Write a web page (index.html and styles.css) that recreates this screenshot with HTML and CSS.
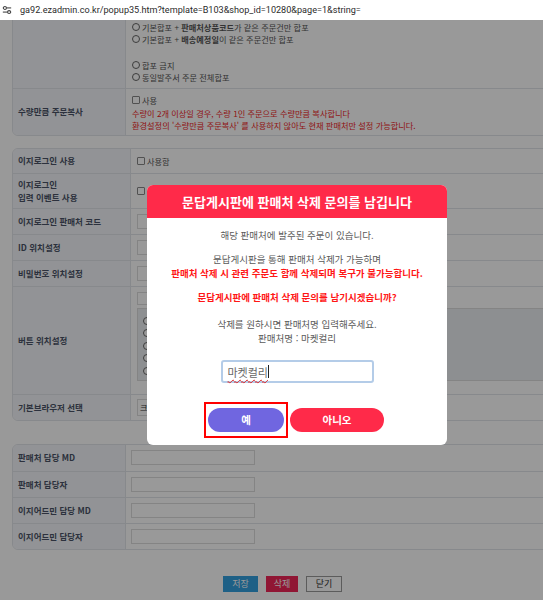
FILE: index.html
```html
<!DOCTYPE html>
<html lang="ko">
<head>
    <meta charset="UTF-8">
    <meta name="viewport" content="width=device-width, initial-scale=1.0">
    <title>판매처 설정</title>
    <link rel="stylesheet" href="styles.css">
</head>
<body>

<div class="urlbar">
    <svg class="site-icon" width="10" height="10" viewBox="0 0 12 12">
        <line x1="1" y1="3.5" x2="11" y2="3.5" stroke="#444" stroke-width="1.3"/>
        <circle cx="3.5" cy="3.5" r="1.8" fill="#fff" stroke="#444" stroke-width="1.3"/>
        <line x1="1" y1="8.5" x2="11" y2="8.5" stroke="#444" stroke-width="1.3"/>
        <circle cx="8.5" cy="8.5" r="1.8" fill="#fff" stroke="#444" stroke-width="1.3"/>
    </svg>
    <span class="url">ga92.ezadmin.co.kr/popup35.htm?template=B103&amp;shop_id=10280&amp;page=1&amp;string=</span>
</div>

<div class="page">
    <div class="content">
        <div class="tbl tbl-top">
            <div class="row">
                <div class="th"></div>
                <div class="td opts">
                    <div class="opt"><span class="radio"></span>기본합포 +&nbsp;<b>판매처상품코드</b>가 같은 주문건만 합포</div>
                    <div class="opt"><span class="radio"></span>기본합포 +&nbsp;<b>배송예정일</b>이 같은 주문건만 합포</div>
                    <div class="opt opt-gap"><span class="radio"></span>합포 금지</div>
                    <div class="opt"><span class="radio"></span>동일발주서 주문 전체합포</div>
                </div>
            </div>
            <div class="row">
                <div class="th">수량만큼 주문복사</div>
                <div class="td copy">
                    <div class="opt"><span class="check"></span>사용</div>
                    <div class="red">수량이 2개 이상일 경우, 수량 1인 주문으로 수량만큼 복사합니다</div>
                    <div class="red">환경설정의 '수량만큼 주문복사' 를 사용하지 않아도 현재 판매처만 설정 가능합니다.</div>
                </div>
            </div>
        </div>

        <div class="tbl tbl-login">
            <div class="row r24">
                <div class="th">이지로그인 사용</div>
                <div class="td"><span class="check"></span>사용함</div>
            </div>
            <div class="row r35">
                <div class="th">이지로그인<br>입력 이벤트 사용</div>
                <div class="td"><span class="check"></span></div>
            </div>
            <div class="row r26">
                <div class="th">이지로그인 판매처 코드</div>
                <div class="td"><span class="field"></span></div>
            </div>
            <div class="row r26">
                <div class="th">ID 위치설정</div>
                <div class="td"><span class="field"></span></div>
            </div>
            <div class="row r26">
                <div class="th">비밀번호 위치설정</div>
                <div class="td"><span class="field"></span></div>
            </div>
            <div class="row r108">
                <div class="th">버튼 위치설정</div>
                <div class="td stack">
                    <span class="field field-sm"></span>
                    <div class="pos-box">
                        <div class="opt"><span class="radio"></span>좌측 상단</div>
                        <div class="opt"><span class="radio"></span>우측 상단</div>
                        <div class="opt"><span class="radio"></span>좌측 하단</div>
                        <div class="opt"><span class="radio"></span>우측 하단</div>
                        <div class="opt"><span class="radio"></span>사용안함</div>
                    </div>
                </div>
            </div>
            <div class="row r26">
                <div class="th">기본브라우저 선택</div>
                <div class="td"><span class="field select">크롬</span></div>
            </div>
        </div>

        <div class="tbl tbl-md">
            <div class="row r26">
                <div class="th">판매처 담당 MD</div>
                <div class="td"><span class="field wide"></span></div>
            </div>
            <div class="row r26">
                <div class="th">판매처 담당자</div>
                <div class="td"><span class="field wide"></span></div>
            </div>
            <div class="row r26">
                <div class="th">이지어드민 담당 MD</div>
                <div class="td"><span class="field wide"></span></div>
            </div>
            <div class="row r26">
                <div class="th">이지어드민 담당자</div>
                <div class="td"><span class="field wide"></span></div>
            </div>
        </div>

        <div class="actions">
            <span class="act act-save">저장</span>
            <span class="act act-del">삭제</span>
            <span class="act act-close">닫기</span>
        </div>
    </div>

    <div class="dim"></div>

    <div class="modal">
        <div class="modal-head">문답게시판에 판매처 삭제 문의를 남깁니다</div>
        <div class="modal-body">
            <p>해당 판매처에 발주된 주문이 있습니다.</p>
            <p>문답게시판을 통해 판매처 삭제가 가능하며<br><strong class="warn">판매처 삭제 시 관련 주문도 함께 삭제되며 복구가 불가능합니다.</strong></p>
            <p class="warn ask">문답게시판에 판매처 삭제 문의를 남기시겠습니까?</p>
            <p>삭제를 원하시면 판매처명 입력해주세요.<br>판매처명 : 마켓컬리</p>
            <div class="name-input"><span class="typo">마켓컬리</span><span class="caret"></span></div>
            <div class="modal-btns">
                <span class="focus-box"><span class="btn btn-yes">예</span></span>
                <span class="btn btn-no">아니오</span>
            </div>
        </div>
    </div>
</div>

</body>
</html>
```

FILE: styles.css
```css
* {
    box-sizing: border-box;
}
body {
    margin: 0;
    font-family: "Noto Sans CJK KR", "Noto Sans", sans-serif;
    background-color: #fff;
    overflow: hidden;
}
.urlbar {
    height: 20px;
    display: flex;
    align-items: center;
    padding-left: 2px;
    background-color: #fff;
}
.site-icon {
    margin-right: 8px;
}
.url {
    font-family: Roboto, "Liberation Sans", sans-serif;
    font-size: 9.1px;
    color: #2b2b2b;
}
.page {
    position: relative;
    height: 580px;
    overflow: hidden;
}
.content {
    width: 565px;
    font-size: 8.2px;
    color: #555;
}
.tbl {
    margin-left: 12px;
    border: 1px solid #e1e4ea;
    border-radius: 6px;
    overflow: hidden;
}
.tbl-top {
    margin-top: -6px;
}
.tbl-login {
    margin-top: 12px;
}
.tbl-md {
    margin-top: 23px;
}
.row {
    display: grid;
    grid-template-columns: 113px 1fr;
    border-top: 1px solid #e1e4ea;
}
.row:first-child {
    border-top: none;
}
.tbl-login .row {
    grid-template-columns: 118px 1fr;
}
.r24 { height: 24px; }
.r26 { height: 26px; }
.r35 { height: 35px; }
.r108 { height: 108px; }
.th {
    background-color: #f4f6fa;
    border-right: 1px solid #e1e4ea;
    padding-left: 5px;
    display: flex;
    align-items: center;
    color: #4a5366;
    font-size: 8.5px;
    font-weight: bold;
    line-height: 13px;
}
.td {
    display: flex;
    align-items: center;
    padding-left: 5px;
}
.tbl-login .td {
    padding-left: 6px;
}
.opts {
    display: block;
    padding: 6px 0 5px 6px;
    line-height: 12px;
}
.copy {
    display: block;
    padding: 5px 0 3px 6px;
    line-height: 12.5px;
}
.opt {
    display: flex;
    align-items: center;
}
.opt-gap {
    margin-top: 14px;
}
.radio {
    width: 8px;
    height: 8px;
    border: 1px solid #666;
    border-radius: 50%;
    margin-right: 2px;
    background-color: #fff;
}
.check {
    width: 8px;
    height: 8px;
    border: 1px solid #888;
    border-radius: 1px;
    margin-right: 2px;
    background-color: #fff;
}
.red {
    color: #ef1e1e;
}
.field {
    display: block;
    width: 200px;
    height: 15px;
    border: 1px solid #dcdcdc;
    background-color: #fff;
}
.field.wide {
    width: 124px;
}
.field-sm {
    height: 13px;
}
.select {
    height: 17px;
    padding-left: 2px;
    line-height: 15px;
    color: #333;
}
.stack {
    flex-direction: column;
    align-items: flex-start;
    justify-content: flex-start;
    padding-top: 5px;
}
.pos-box {
    margin-top: 3px;
    width: 100%;
    height: 73px;
    border: 1px solid #dcdcdc;
    border-right: none;
    background-color: #eceef2;
    padding: 6px 0 0 5px;
    line-height: 12.5px;
}
.actions {
    display: flex;
    justify-content: center;
    gap: 8px;
    margin-top: 26px;
}
.act {
    height: 16px;
    font-size: 9px;
    line-height: 16px;
    text-align: center;
    color: #fff;
}
.act-save {
    background-color: #33a0e0;
    width: 35px;
}
.act-del {
    background-color: #f02658;
    width: 32px;
}
.act-close {
    background-color: #fff;
    color: #333;
    border: 1px solid #999;
    line-height: 14px;
    width: 36px;
}
.dim {
    position: absolute;
    top: 0;
    left: 0;
    right: 0;
    bottom: 0;
    background-color: rgba(0, 0, 0, 0.4);
}
.modal {
    position: absolute;
    top: 165px;
    left: 147px;
    width: 300px;
    height: 260px;
    background-color: #fff;
    border-radius: 6px;
    overflow: hidden;
}
.modal-head {
    height: 33px;
    background-color: #ff2a49;
    color: #fff;
    font-size: 13px;
    font-weight: bold;
    text-align: center;
    line-height: 33px;
}
.modal-body {
    padding-top: 10px;
    text-align: center;
    font-size: 9.5px;
    line-height: 14px;
    color: #5a5a5a;
}
.modal-body p {
    margin: 0 0 10px;
}
.warn {
    color: #ff1616;
    font-weight: bold;
}
.modal-body p.ask {
    margin-bottom: 13px;
}
.name-input {
    width: 153px;
    height: 23px;
    margin: 15px auto 0;
    border: 2px solid #b4cce8;
    border-radius: 3px;
    display: flex;
    align-items: center;
    padding-left: 5px;
    font-size: 11px;
    color: #666;
}
.typo {
    text-decoration: underline wavy #e02020;
    text-decoration-thickness: 1px;
    text-underline-offset: 2px;
}
.caret {
    width: 1px;
    height: 13px;
    background-color: #222;
}
.modal-btns {
    display: flex;
    justify-content: center;
    align-items: center;
    gap: 2px;
    margin-top: 19px;
    padding-right: 6px;
}
.focus-box {
    border: 2px solid #ff0000;
    padding: 4px 2px;
}
.btn {
    display: block;
    height: 24px;
    line-height: 24px;
    border-radius: 12px;
    text-align: center;
    color: #fff;
    font-size: 10.5px;
    font-weight: bold;
}
.btn-yes {
    width: 76px;
    background-color: #7066e0;
}
.btn-no {
    width: 94px;
    background-color: #ff2a49;
}
```
